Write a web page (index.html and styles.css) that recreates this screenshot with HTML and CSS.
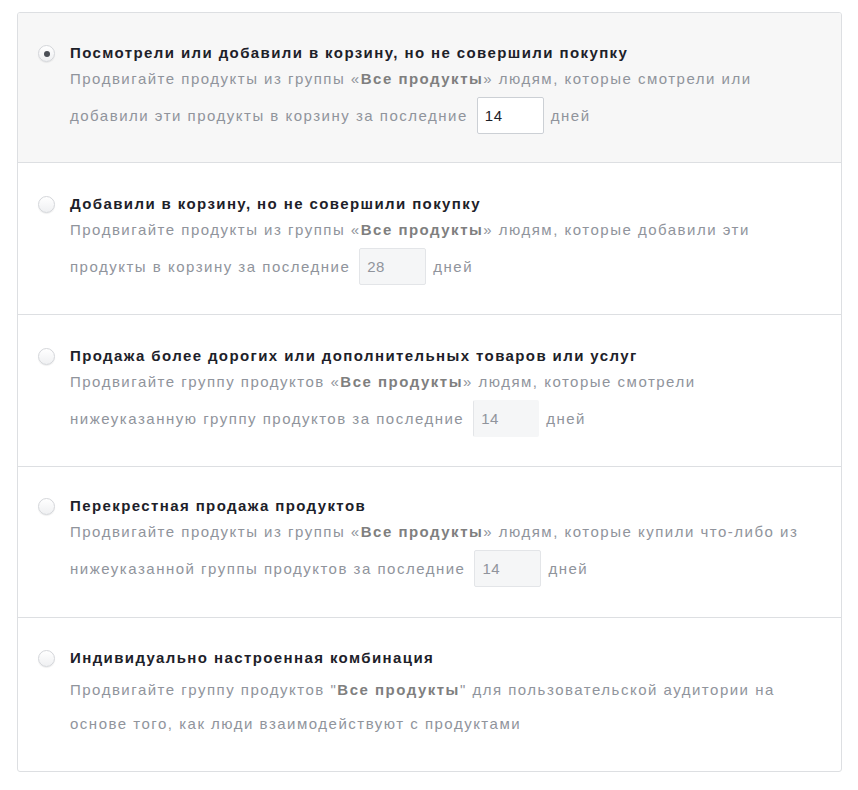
FILE: index.html
```html
<!DOCTYPE html>
<html lang="ru">

<head>
    <meta charset="UTF-8">
    <meta name="viewport" content="width=device-width, initial-scale=1.0">
    <title>Аудитория</title>
    <link rel="stylesheet" href="styles.css">
</head>

<body>
    <div class="options">
        <div class="option selected">
            <span class="radio checked"></span>
            <div class="body">
                <div class="title">Посмотрели или добавили в корзину, но не совершили покупку</div>
                <div class="desc">Продвигайте продукты из группы «<b>Все продукты</b>» людям, которые смотрели или</div>
                <div class="desc line">добавили эти продукты в корзину за последние <input type="text" class="days" value="14"> дней</div>
            </div>
        </div>
        <div class="option tall">
            <span class="radio"></span>
            <div class="body">
                <div class="title">Добавили в корзину, но не совершили покупку</div>
                <div class="desc">Продвигайте продукты из группы «<b>Все продукты</b>» людям, которые добавили эти</div>
                <div class="desc line">продукты в корзину за последние <input type="text" class="days" value="28" disabled> дней</div>
            </div>
        </div>
        <div class="option tall">
            <span class="radio"></span>
            <div class="body">
                <div class="title">Продажа более дорогих или дополнительных товаров или услуг</div>
                <div class="desc">Продвигайте группу продуктов «<b>Все продукты</b>» людям, которые смотрели</div>
                <div class="desc line">нижеуказанную группу продуктов за последние <input type="text" class="days flat" value="14" disabled> дней</div>
            </div>
        </div>
        <div class="option">
            <span class="radio"></span>
            <div class="body">
                <div class="title">Перекрестная продажа продуктов</div>
                <div class="desc">Продвигайте продукты из группы «<b>Все продукты</b>» людям, которые купили что-либо из</div>
                <div class="desc line">нижеуказанной группы продуктов за последние <input type="text" class="days" value="14" disabled> дней</div>
            </div>
        </div>
        <div class="option last">
            <span class="radio"></span>
            <div class="body">
                <div class="title">Индивидуально настроенная комбинация</div>
                <div class="desc text">Продвигайте группу продуктов "<b>Все продукты</b>" для пользовательской аудитории на<br>основе того, как люди взаимодействуют с продуктами</div>
            </div>
        </div>
    </div>
</body>

</html>
```

FILE: styles.css
```css
* {
    box-sizing: border-box;
    margin: 0;
    padding: 0;
}

body {
    padding: 12px 17px;
    background: #fff;
    font-family: "Liberation Sans", Arial, sans-serif;
    font-size: 15px;
    color: #1d2129;
}

.options {
    width: 825px;
    border: 1px solid #dddfe2;
    border-radius: 3px;
    overflow: hidden;
}

.option {
    display: flex;
    height: 151px;
    padding: 29px 20px 0 20px;
    border-bottom: 1px solid #dddfe2;
}

.option.selected {
    height: 150px;
    padding-top: 30px;
    background: #f7f7f7;
}

.option.tall {
    height: 152px;
    padding-top: 31px;
}

.option.last {
    border-bottom: none;
    height: 153px;
    padding-top: 30px;
}

.radio {
    flex: none;
    width: 17px;
    height: 17px;
    margin-top: 2px;
    margin-right: 15px;
    border: 1px solid #d4d6da;
    border-radius: 50%;
    background: linear-gradient(#ffffff, #eff0f2);
    box-shadow: 0 1px 1px rgba(0, 0, 0, 0.07);
    position: relative;
}

.radio.checked::after {
    content: "";
    position: absolute;
    left: 4.5px;
    top: 4.5px;
    width: 6px;
    height: 6px;
    border-radius: 50%;
    background: #4b4f56;
}

.title {
    font-weight: bold;
    line-height: 20px;
    letter-spacing: 1.4px;
}

.desc {
    margin-top: 6px;
    line-height: 20px;
    color: #90949c;
    letter-spacing: 1.5px;
    white-space: nowrap;
}

.desc b {
    color: #7f7f7f;
}

.desc.line {
    display: flex;
    align-items: center;
    margin-top: 8px;
}

.desc.text {
    line-height: 34px;
    margin-top: 5px;
}

.days {
    width: 67px;
    height: 37px;
    margin: 0 7px 0 9px;
    padding: 0 7px;
    border: 1px solid #ccd0d5;
    border-radius: 2px;
    background: #fff;
    font-family: inherit;
    font-size: 15px;
    letter-spacing: 0.5px;
    color: #1d2129;
}

.days:disabled {
    background: #f5f6f7;
    border-color: #e3e5e8;
    color: #90949c;
}

.days.flat {
    width: 66px;
    border-color: #f5f6f7;
    border-left-color: #e3e5e8;
}
```
